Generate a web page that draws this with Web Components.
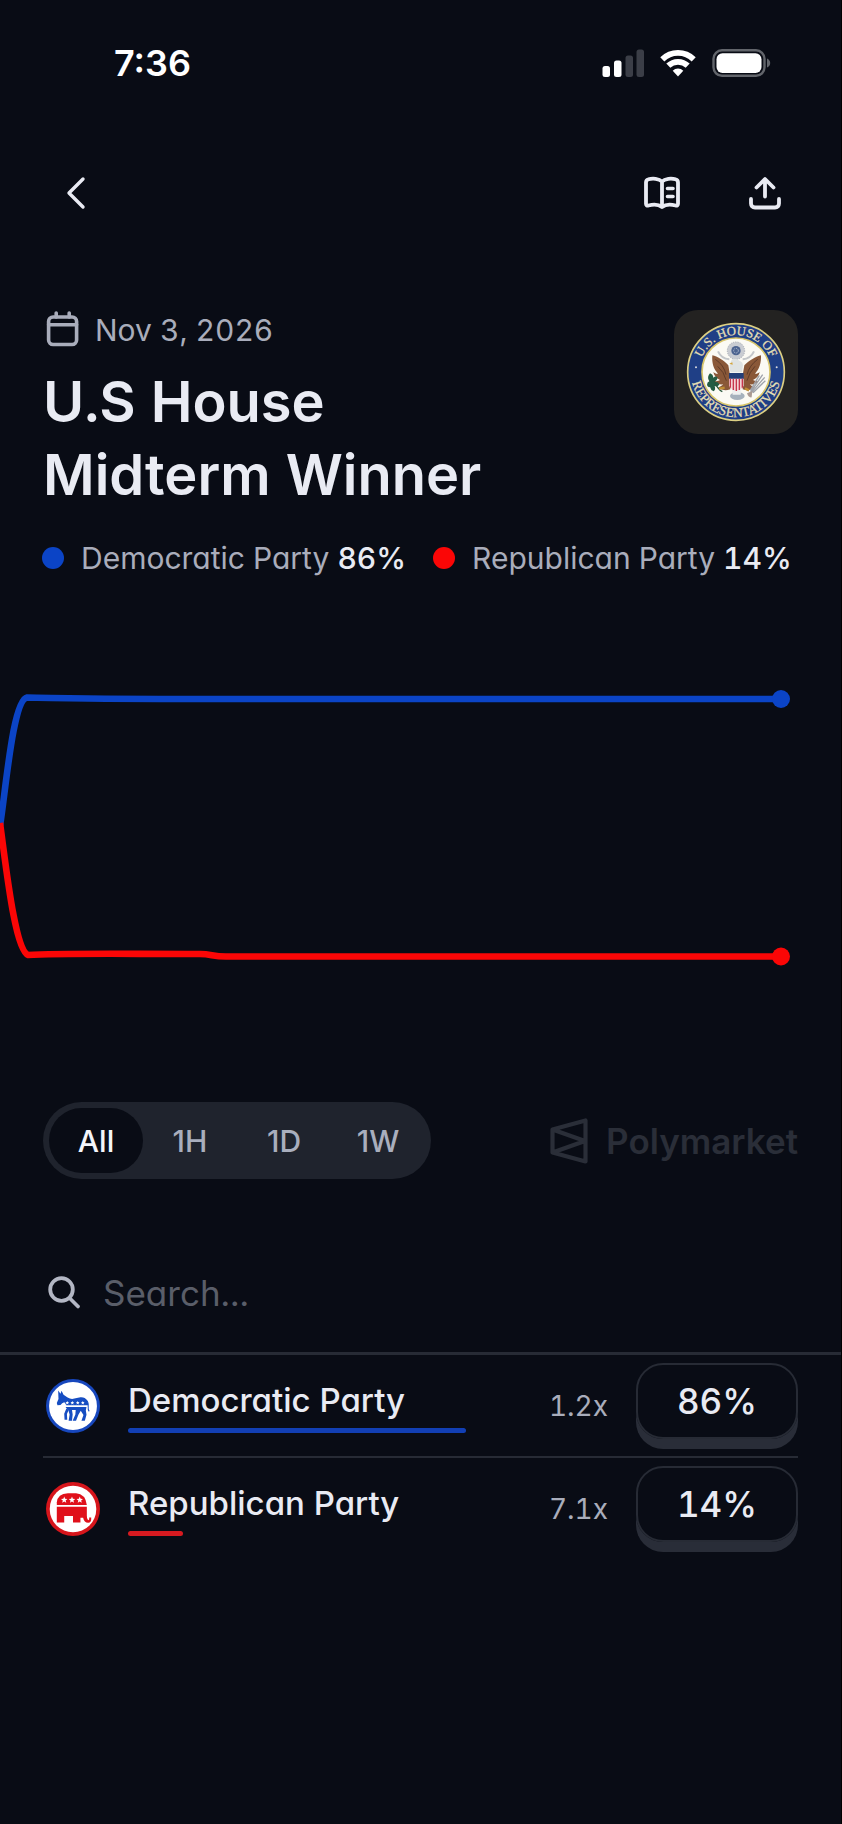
<!DOCTYPE html>
<html lang="en">
<head>
<meta charset="utf-8">
<meta name="viewport" content="width=device-width, initial-scale=1">
<title>U.S House Midterm Winner</title>
<style>
  :root {
    --bg: #090c15;
    --line: #272b35;
    --text: #e9ebf3;
    --muted: #a9adbb;
    --blue: #0b44c6;
    --red: #fb0606;
    --gutter: 43px;
  }
  body {
    margin: 0;
    min-height: 100vh;
    box-sizing: border-box;
    border-right: 1px solid #000;
    background: var(--bg);
    color: var(--text);
    font-family: Inter, "Liberation Sans", sans-serif;
    font-feature-settings: "cv11", "tnum";
  }
</style>
</head>
<body>
<market-page></market-page>

<script>
class StatusBar extends HTMLElement {
  constructor() {
    super();
    this.attachShadow({mode: 'open'});
    this.shadowRoot.innerHTML = `
      <style>
        :host {
          display: flex;
          align-items: center;
          justify-content: space-between;
          height: 126px;
          padding: 0 69px 0 114px;
          color: #fff;
          font-size: 36px;
          font-weight: 600;
          font-feature-settings: normal;
        }
        .icons {
          display: flex;
          align-items: center;
          gap: 16px;
        }
        svg { display: block; }
      </style>
      <slot></slot>
      <div class="icons">
        <svg width="42" height="28" viewBox="0 0 42 28" fill="#fff" aria-hidden="true">
          <rect x="0.500" y="17" width="7.500" height="11" rx="2.5"/>
          <rect x="12" y="11.500" width="7.500" height="16.500" rx="2.500"/>
          <g fill="#3b3e47">
            <rect x="23.500" y="6.500" width="7.500" height="21.500" rx="2.500"/>
            <rect x="34.500" y="0.500" width="7.500" height="27.500" rx="2.500"/>
          </g>
        </svg>
        <svg width="36" height="28" viewBox="0 0 36 28" fill="none" stroke="#fff" stroke-width="5.800" aria-hidden="true">
          <path d="M2.300 10.300a22.500 22.500 0 0 1 31.400 0"/>
          <path d="M8.300 16.700a14 14 0 0 1 19.400 0"/>
          <path d="M18 27.500l-5.300-5.800a7.800 7.800 0 0 1 10.600 0z" fill="#fff" stroke="none"/>
        </svg>
        <svg width="60" height="28" viewBox="0 0 60 28" aria-hidden="true">
          <rect x="1.500" y="1.300" width="51" height="25.500" rx="8.500" fill="none" stroke="#62656b" stroke-width="2.400"/>
          <rect x="4.500" y="4.200" width="45" height="19.700" rx="6" fill="#fff"/>
          <path d="M55 9.500q3.200 1.500 3.200 4.500t-3.200 4.500z" fill="#62656b"/>
        </svg>
      </div>
    `;
  }
}
customElements.define('status-bar', StatusBar);

class IconButton extends HTMLElement {
  constructor() {
    super();
    this.attachShadow({mode: 'open'});
    this.shadowRoot.innerHTML = `
      <style>
        :host { display: block; }
        button {
          display: grid;
          place-items: center;
          width: 48px;
          height: 48px;
          padding: 0;
          border: none;
          background: none;
          color: inherit;
          cursor: pointer;
        }
      </style>
      <button type="button" aria-label="${this.getAttribute('label')}"><slot></slot></button>
    `;
  }
}
customElements.define('icon-button', IconButton);

class NavBar extends HTMLElement {
  constructor() {
    super();
    this.attachShadow({mode: 'open'});
    this.shadowRoot.innerHTML = `
      <style>
        :host {
          display: flex;
          align-items: center;
          height: 134px;
          padding: 0 52px;
        }
        .actions {
          display: flex;
          gap: 55px;
          margin-left: auto;
        }
        svg {
          display: block;
          fill: none;
          stroke: currentColor;
          stroke-width: 3.8;
          stroke-linecap: round;
          stroke-linejoin: round;
        }
      </style>
      <icon-button label="Back">
        <svg width="36" height="36" viewBox="0 0 36 36"><path d="M25 4L11 18l14 14" stroke-width="3.400"/></svg>
      </icon-button>
      <div class="actions">
        <icon-button label="Rules">
          <svg width="38" height="36" viewBox="0 0 38 36">
            <path d="M19 6.500C16 3.500 9.500 3 5.500 4.300c-1.700.5-2.500 1.700-2.500 3.200v21.300c0 1.500 1 2.200 2.400 1.700C10 29.200 15.500 29.300 19 32c3.500-2.700 9-2.800 13.600-1.500 1.400.5 2.400-.2 2.400-1.700V7.500c0-1.500-.8-2.700-2.500-3.200C28.500 3 22 3.500 19 6.500zM19 6.500V32"/>
            <path d="M24.500 13.500h5.500M24.500 21.500h5.500" stroke-width="3.600"/>
          </svg>
        </icon-button>
        <icon-button label="Share">
          <svg width="36" height="36" viewBox="0 0 36 36">
            <path d="M18 21.500V4.500M9.500 12.500L18 4l8.500 8.500"/>
            <path d="M4 24v4.500c0 2.200 1.500 4 4 4h20c2.500 0 4-1.800 4-4V24"/>
          </svg>
        </icon-button>
      </div>
    `;
  }
}
customElements.define('nav-bar', NavBar);

class HouseSeal extends HTMLElement {
  constructor() {
    super();
    this.attachShadow({mode: 'open'});
    this.shadowRoot.innerHTML = `
      <style>
        :host {
          display: block;
          width: 124px;
          height: 124px;
          flex: none;
          border-radius: 24px;
          background: #232221;
        }
        svg { display: block; }
        text {
          font-family: "Liberation Serif", serif;
          fill: #e6dfb4;
          stroke: #e6dfb4;
          stroke-width: 0.8;
        }
      </style>
      <svg width="124" height="124" viewBox="-186 -186 372 372">
        <defs>
          <path id="top" d="M-111 0A111 111 0 0 1 111 0"/>
          <path id="bottom" d="M-130 -36A135 135 0 1 0 130 -36"/>
        </defs>
        <circle r="145" fill="#1f3f86" stroke="#dccf83" stroke-width="5"/>
        <circle r="102" fill="#fbfaf4" stroke="#d8c56a" stroke-width="5"/>
        <text font-size="38" text-anchor="middle"><textPath href="#top" startOffset="50%">U.S. HOUSE OF</textPath></text>
        <text font-size="40" text-anchor="middle"><textPath href="#bottom" startOffset="50%">REPRESENTATIVES</textPath></text>
        <circle cx="-120" cy="-14" r="3" fill="#d9dbe0"/>
        <circle cx="122" cy="-14" r="3" fill="#d9dbe0"/>
        <!-- glory above the eagle -->
        <circle cy="-64" r="26" fill="#c9ccd2" stroke="#a9adb5" stroke-width="3" stroke-dasharray="4 3"/>
        <circle cy="-64" r="14" fill="#4d6490"/>
        <circle cy="-64" r="7" fill="none" stroke="#c2cbdc" stroke-width="3" stroke-dasharray="3 3"/>
        <path d="M-54 -62q10 22 34 24M54 -62q-10 22-34 24" fill="none" stroke="#c4c7ca" stroke-width="6"/>
        <!-- wings -->
        <path d="M-71 -50C-56 -47-38 -36-23 -20l5 30 1 42c-18 6-33 0-36-6 6-2 11-5 14-9-11 1-20-2-25-10 6 1 12 0 16-3-11-5-18-13-20-24 5 4 9 6 14 5-13-13-19-32-17-55z" fill="#8a5838"/>
        <path d="M75 -50C60 -47 42 -36 25 -20L20 10l0 42c18 6 33 0 36-6-6-2-11-5-14-9 11 1 20-2 25-10-6 1-12 0-16-3 11-5 18-13 20-24-5 4-9 6-14 5 13-13 19-32 18-55z" fill="#8a5838"/>
        <path d="M-62 -38q26 17 32 46M-55 -17q19 16 26 43M65 -38Q40 -20 33 8M57 -17Q40 0 33 26" fill="none" stroke="#5f3b28" stroke-width="3"/>
        <!-- head, shield and tail -->
        <path d="M-16 -30q4-13 18-9l10 6q8 3 9 11l-3 23h-34q-7-12 0-31z" fill="#dfe3e3"/>
        <path d="M-11 -29l-9 4 10 3z" fill="#d4a437"/>
        <ellipse cx="4" cy="72" rx="22" ry="12" fill="#a5b1bd"/>
        <path d="M-12 52h28l-2 16h-24z" fill="#eef0f1"/>
        <path d="M-21 3h44v19h-44z" fill="#243f78"/>
        <path d="M-21 20h44v20q-2 13-22 17-20-4-22-17z" fill="#f3d3d5"/>
        <path d="M-17 20v27M-8 20v34M1 20v37M10 20v34M19 20v27" stroke="#c7374e" stroke-width="4"/>
        <!-- olive branch and arrows -->
        <path d="M-78 4q9 3 10 13 8-7 13 0-2 9-9 12 12 0 14 9-7 8-14 4 4 11-3 16-9-3-11-13-7 2-9-6 0-9 7-11-9-12 2-24z" fill="#245c43"/>
        <path d="M-66 26q10 25 25 33" fill="none" stroke="#29573c" stroke-width="4"/>
        <path d="M-51 50l17-3M39 55l-12-6" stroke="#c08e33" stroke-width="7"/>
        <path d="M80 8L44 60M86 16L47 61M88 26L51 62M70 10L43 55" stroke="#9ea2aa" stroke-width="4"/>
        <path d="M33 64l16-7-2 19q-10 2-14-12z" fill="#aa9a93"/>
      </svg>
    `;
  }
}
customElements.define('house-seal', HouseSeal);

class MarketHeader extends HTMLElement {
  constructor() {
    super();
    this.attachShadow({mode: 'open'});
    this.shadowRoot.innerHTML = `
      <style>
        :host {
          display: flex;
          align-items: flex-start;
          justify-content: space-between;
          gap: 24px;
          margin-top: 50px;
          padding: 0 var(--gutter);
        }
        .date {
          display: flex;
          align-items: center;
          gap: 14px;
          height: 40px;
          margin-bottom: 16px;
          color: var(--muted);
          font-size: 30px;
        }
        svg { display: block; }
        ::slotted(h1) {
          margin: 0;
          font-size: 56px;
          line-height: 73px;
          font-weight: 600;
        }
      </style>
      <div>
        <div class="date">
          <svg width="38" height="38" viewBox="0 0 38 38" fill="none" stroke="currentColor" stroke-width="3.600" stroke-linecap="round" aria-hidden="true">
            <rect x="5.600" y="6" width="28" height="27.500" rx="4.500"/>
            <path d="M5.600 13.700h28M13.200 2v4M26.200 2v4"/>
          </svg>
          <slot name="date"></slot>
        </div>
        <slot></slot>
      </div>
      <house-seal></house-seal>
    `;
  }
}
customElements.define('market-header', MarketHeader);

class ChartLegend extends HTMLElement {
  constructor() {
    super();
    this.attachShadow({mode: 'open'});
    this.shadowRoot.innerHTML = `
      <style>
        :host {
          display: flex;
          gap: 27px;
          margin-top: 28px;
          padding: 0 42px;
        }
      </style>
      <slot></slot>
    `;
  }
}
customElements.define('chart-legend', ChartLegend);

class LegendItem extends HTMLElement {
  constructor() {
    super();
    this.attachShadow({mode: 'open'});
    this.shadowRoot.innerHTML = `
      <style>
        :host {
          display: flex;
          align-items: center;
          font-size: 30px;
          line-height: 36px;
          color: var(--muted);
          white-space: nowrap;
        }
        i {
          width: 22px;
          height: 22px;
          margin-right: 17px;
          border-radius: 50%;
          background: var(--series);
        }
        b {
          margin-left: 8px;
          font-weight: 500;
          color: var(--text);
        }
      </style>
      <i></i><slot></slot><b>${this.getAttribute('value')}</b>
    `;
  }
}
customElements.define('legend-item', LegendItem);

class OddsChart extends HTMLElement {
  constructor() {
    super();
    this.attachShadow({mode: 'open'});
    this.shadowRoot.innerHTML = `
      <style>
        :host {
          display: block;
          margin: 44px 0 62px;
        }
        svg {
          display: block;
          width: 100%;
          height: auto;
        }
        path { fill: none; stroke-width: 6.6; stroke-linejoin: round; }
      </style>
      <svg viewBox="0 0 841 420" role="img" aria-label="Chance over time">
        <path stroke="var(--blue)" d="M0 206C6 168 13 80 27 77.500C60 78 90 79 160 79H781"/>
        <path stroke="var(--red)" d="M0 203C6 246 15 330 28 335C60 333 120 334 200 334C212 334 212 336.500 226 336.500H781"/>
        <circle cx="781" cy="79" r="9" fill="var(--blue)"/>
        <circle cx="781" cy="336.500" r="9" fill="var(--red)"/>
      </svg>
    `;
  }
}
customElements.define('odds-chart', OddsChart);

class RangeTabs extends HTMLElement {
  constructor() {
    super();
    this.attachShadow({mode: 'open'});
    this.shadowRoot.innerHTML = `
      <style>
        :host {
          display: flex;
          padding: 6px;
          border-radius: 39px;
          background: #1f232d;
        }
        button {
          width: 94px;
          height: 65px;
          padding: 0;
          border: none;
          border-radius: 33px;
          background: none;
          color: #a9aebd;
          font: inherit;
          font-feature-settings: normal;
          font-size: 30px;
          font-weight: 500;
          cursor: pointer;
        }
        button[aria-pressed="true"] {
          background: var(--bg);
          color: #f4f5fa;
        }
      </style>
    `;
    for (const range of ['All', '1H', '1D', '1W']) {
      const button = document.createElement('button');
      button.type = 'button';
      button.textContent = range;
      button.setAttribute('aria-pressed', String(range == 'All'));
      button.addEventListener('click', () => this.select(button));
      this.shadowRoot.append(button);
    }
  }

  select(selected) {
    for (const button of this.shadowRoot.querySelectorAll('button')) {
      button.setAttribute('aria-pressed', String(button == selected));
    }
  }
}
customElements.define('range-tabs', RangeTabs);

class BrandMark extends HTMLElement {
  constructor() {
    super();
    this.attachShadow({mode: 'open'});
    this.shadowRoot.innerHTML = `
      <style>
        :host {
          display: flex;
          align-items: center;
          gap: 18px;
          color: #2a2e38;
          font-size: 35px;
          font-weight: 600;
          font-feature-settings: normal;
        }
        svg { display: block; }
      </style>
      <svg width="38" height="46" viewBox="0 0 38 46" fill="none" stroke="currentColor" stroke-width="4.200" stroke-linejoin="round" aria-hidden="true">
        <path d="M2.500 11.500L35.500 2.500v41L2.500 34.500zM2.500 11.500L35 23L2.500 34.500"/>
      </svg>
      <slot></slot>
    `;
  }
}
customElements.define('brand-mark', BrandMark);

class SearchField extends HTMLElement {
  constructor() {
    super();
    this.attachShadow({mode: 'open'});
    this.shadowRoot.innerHTML = `
      <style>
        :host {
          display: block;
          margin-top: 54px;
          border-bottom: 3px solid var(--line);
        }
        label {
          display: flex;
          align-items: center;
          gap: 22px;
          height: 119px;
          padding: 0 var(--gutter);
        }
        svg { flex: none; }
        input {
          flex: 1;
          min-width: 0;
          padding: 0;
          border: none;
          outline: none;
          background: none;
          color: var(--text);
          font: inherit;
          font-feature-settings: inherit;
          font-size: 35px;
        }
        input::placeholder { color: #5a5e69; }
      </style>
      <label>
        <svg width="38" height="38" viewBox="0 0 38 38" fill="none" stroke="#b3b7c4" stroke-width="3.800" stroke-linecap="round" aria-hidden="true">
          <circle cx="18.500" cy="15.500" r="11.300"/>
          <path d="M27 24.500l8 8"/>
        </svg>
        <input type="search" placeholder="Search..." aria-label="Search">
      </label>
    `;
  }
}
customElements.define('search-field', SearchField);

class OutcomeRow extends HTMLElement {
  constructor() {
    super();
    this.attachShadow({mode: 'open'});
    this.shadowRoot.innerHTML = `
      <style>
        :host {
          display: flex;
          align-items: center;
          gap: 28px;
          margin: 0 var(--gutter);
          padding: 8px 0 7px 3px;
          border-bottom: 2px solid var(--line);
        }
        :host(:last-of-type) { border-bottom: none; }
        .info {
          flex: 1;
          min-width: 0;
        }
        .name {
          font-size: 33px;
          line-height: 42px;
          font-weight: 500;
          white-space: nowrap;
        }
        .bar {
          width: ${this.getAttribute('value')};
          height: 5px;
          margin-top: 7px;
          border-radius: 3px;
          background: var(--series);
        }
        .payout {
          min-width: 58px;
          color: var(--muted);
          font-size: 28px;
          text-align: right;
        }
        button {
          width: 162px;
          height: 76px;
          margin-bottom: 10px;
          padding: 0;
          border: 2px solid var(--line);
          border-radius: 27px;
          background: none;
          box-shadow: 0 10px 0 #292d38;
          color: var(--text);
          font: inherit;
          font-feature-settings: inherit;
          font-size: 35px;
          font-weight: 500;
          cursor: pointer;
        }
      </style>
      <slot name="icon"></slot>
      <div class="info">
        <div class="name"><slot></slot></div>
        <div class="bar"></div>
      </div>
      <span class="payout">${this.getAttribute('payout')}</span>
      <button type="button">${this.getAttribute('value')}</button>
    `;
  }
}
customElements.define('outcome-row', OutcomeRow);

class MarketPage extends HTMLElement {
  constructor() {
    super();
    this.attachShadow({mode: 'open'});
    this.shadowRoot.innerHTML = `
      <style>
        :host { display: block; }
        .toolbar {
          display: flex;
          align-items: center;
          justify-content: space-between;
          padding: 0 var(--gutter);
        }
        .democratic { --series: #123fb4; }
        .republican { --series: #d71a20; }
        legend-item.democratic { --series: var(--blue); }
        legend-item.republican { --series: var(--red); }
        outcome-row svg { display: block; }
      </style>
      <status-bar>7:36</status-bar>
      <nav-bar></nav-bar>
      <main>
        <market-header>
          <time slot="date" datetime="2026-11-03">Nov 3, 2026</time>
          <h1>U.S House<br>Midterm Winner</h1>
        </market-header>
        <chart-legend>
          <legend-item class="democratic" value="86%">Democratic Party</legend-item>
          <legend-item class="republican" value="14%">Republican Party</legend-item>
        </chart-legend>
        <odds-chart></odds-chart>
        <div class="toolbar">
          <range-tabs></range-tabs>
          <brand-mark>Polymarket</brand-mark>
        </div>
        <search-field></search-field>
        <outcome-row class="democratic" value="86%" payout="1.2x">
          <svg slot="icon" width="54" height="54" viewBox="0 0 160 160" aria-hidden="true">
            <circle cx="80" cy="80" r="80" fill="#1747bd"/>
            <circle cx="80" cy="80" r="71" fill="#fff"/>
            <!-- donkey -->
            <g fill="#164dc2">
              <path d="M36 34l7 10 3-9 6 12 12 8q10 6 20 3l18-4q14-1 19 9 4 6 4 15H60q-3-7-6-9l-6 3-5 5-9 1-2-7 5-12z"/>
              <path d="M58 83h62l-2 10 2 13-5 18h-10l6-17-8-13-7 12-7 18h-10l8-19 1-13H77l2 13-2 19H67l3-19-4-13q-6-4-8-9z"/>
              <path d="M68 90l-6 14 1 17h-8l-1-18 6-15z"/>
              <path d="M119 62q7 6 6 18t3 16" fill="none" stroke="#164dc2" stroke-width="3"/>
            </g>
            <g fill="#fff">
              <path id="star" d="M63 65l1.500 3.500 4 .3-3 2.500 1 4-3.500-2-3.500 2 1-4-3-2.500 4-.3z"/>
              <use href="#star" x="15"/>
              <use href="#star" x="31"/>
              <use href="#star" x="46"/>
            </g>
          </svg>
          Democratic Party
        </outcome-row>
        <outcome-row class="republican" value="14%" payout="7.1x">
          <svg slot="icon" width="54" height="54" viewBox="0 0 160 160" aria-hidden="true">
            <circle cx="80" cy="80" r="80" fill="#d6151b"/>
            <circle cx="80" cy="80" r="69" fill="#fff"/>
            <!-- elephant -->
            <g fill="#e0101a">
              <path d="M32 68V60q2-25 33-27h24q28 2 32 35z"/>
              <path d="M32 73h89v27q1 13 5 13 3-1 2-8h6q1 16-9 16-12 0-15-15h-8v14H80v-19H54v19H32z"/>
            </g>
            <g fill="#fff">
              <path id="big-star" d="M54 43l2.600 6.500 7 .5-5.400 4.600 1.800 6.900-6-3.800-6 3.800 1.800-6.900-5.400-4.600 7-.5z"/>
              <use href="#big-star" x="23"/>
              <use href="#big-star" x="46"/>
            </g>
          </svg>
          Republican Party
        </outcome-row>
      </main>
    `;
  }
}
customElements.define('market-page', MarketPage);
</script>
</body>
</html>
